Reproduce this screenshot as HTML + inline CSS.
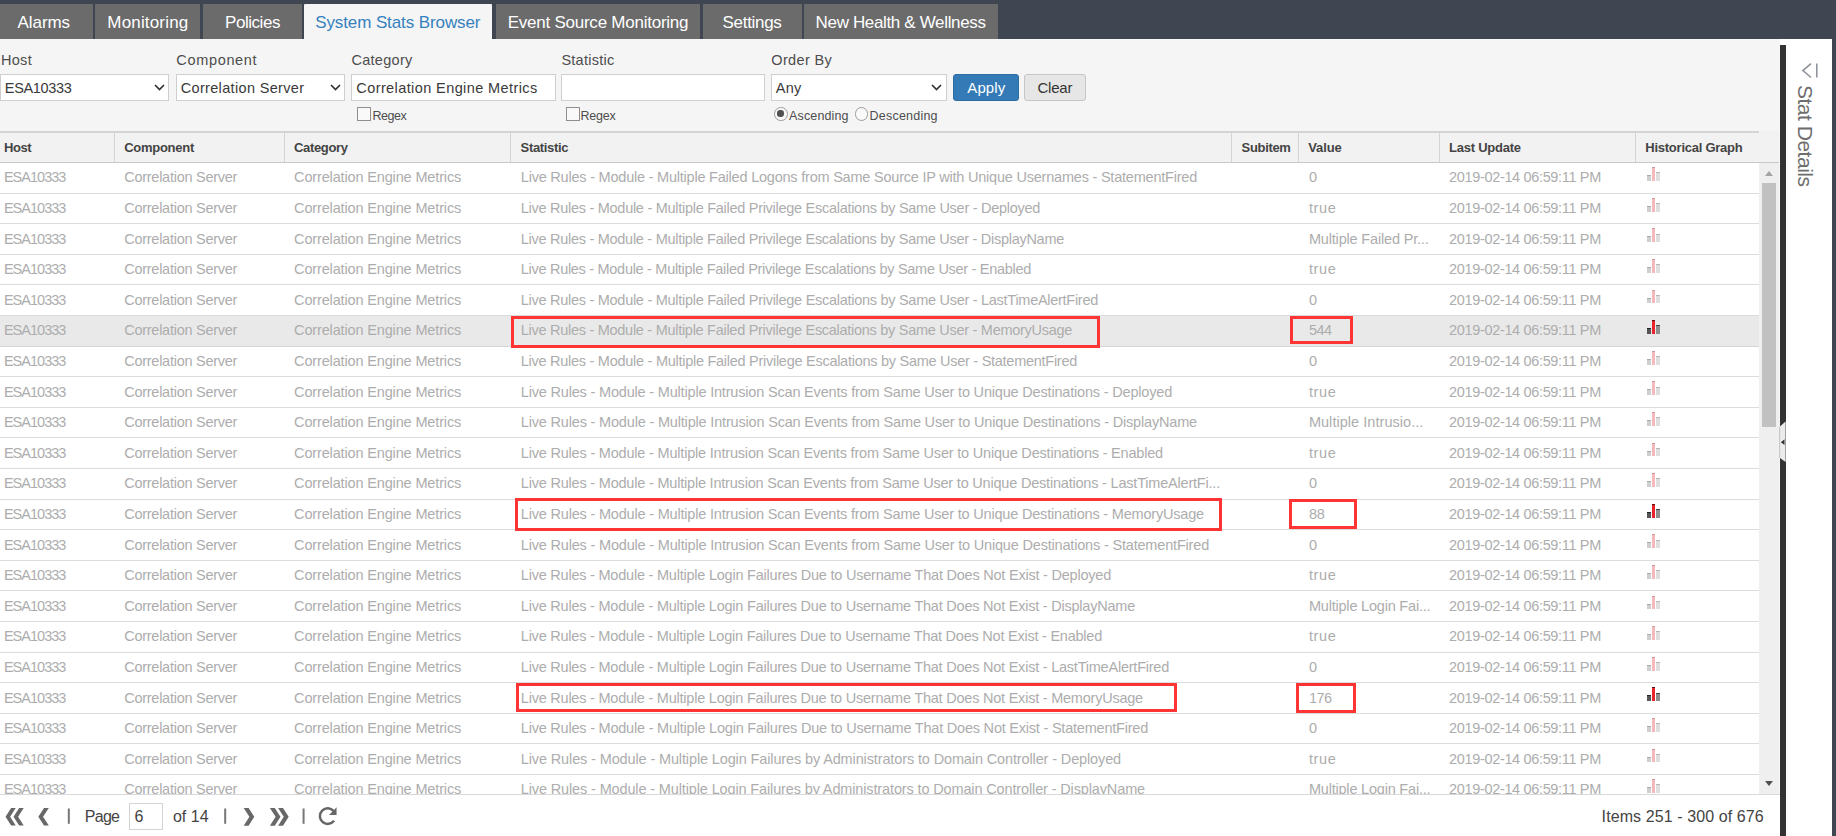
<!DOCTYPE html>
<html><head><meta charset="utf-8">
<style>
*{box-sizing:border-box;margin:0;padding:0}
html,body{width:1836px;height:836px;overflow:hidden;background:#3f4551;font-family:"Liberation Sans",sans-serif;position:relative}
.abs{position:absolute}
.t{position:absolute;white-space:pre;line-height:1}
.tab{position:absolute;top:4.3px;height:35.1px;background:#6b6b6b;border-radius:1px 1px 0 0}
.tab.act{background:#f5f5f5;height:35.7px}
#main{position:absolute;left:0;top:39.4px;width:1780px;height:797px;background:#f5f5f5}
.inp{position:absolute;top:74px;height:26.5px;background:#fff;border:1px solid #cfcfcf}
.chev{position:absolute;top:9px;width:11px;height:7px}
.cb{position:absolute;top:107.4px;width:13.8px;height:13.6px;border:1.5px solid #8e8e8e;background:#f9f9f9;border-radius:0.5px}
.rad{position:absolute;top:107.4px;width:13.6px;height:13.6px;border:1.5px solid #9c9c9c;border-radius:50%;background:#f9f9f9}
.btn{position:absolute;top:73.6px;height:27.1px;border-radius:3px}
#thead{position:absolute;left:0;top:131.1px;width:1779px;height:32px;background:#f2f2f2;border-bottom:1.6px solid #c8c8c8}
#thead .tb{position:absolute;left:0;top:0;width:1759px;height:1.6px;background:#d4d4d4}
.hsep{position:absolute;top:1.6px;width:1.2px;height:29.4px;background:#d4d4d4}
#tbody{position:absolute;left:0;top:163.1px;width:1759px;height:631.3px;overflow:hidden;background:#fff}
.row{position:absolute;left:0;width:1759px;height:30.6px;border-bottom:1.4px solid #dcdcdc}
.row.hl{background:#e9e9e9;border-bottom-color:#d6d6d6}
.gi{position:absolute;left:1647px;top:3.9px;width:14px;height:14px}
.gi i{position:absolute;bottom:0;width:3.8px}
.gi .b1{left:0;height:5.7px;background:#cfcfcf;border-top:1px solid #a9a9a9}
.gi .b2{left:4.7px;height:13.8px;background:#f6b9bb;border-top:1px solid #c89a9a}
.gi .b3{left:9.1px;height:8.6px;background:#dedede;border-top:1px solid #b7b7b7}
.gi.dk .b1{background:#555;border-top-color:#222}
.gi.dk .b2{background:#e8232a;border-top-color:#5a0f10}
.gi.dk .b3{background:#8e8e8e;border-top-color:#444}
.rb{position:absolute;border:3.4px solid #ff3434}
#sbar{position:absolute;left:1759px;top:163.1px;width:20px;height:631.3px;background:#efefef}
#foot{position:absolute;left:0;top:794.4px;width:1780px;height:42px;background:#fff;border-top:1.3px solid #d9d9d9}

</style></head><body>
<div class="tab" style="left:-6px;width:98.6px"></div>
<span class="t" style="left:17.60px;top:14.41px;font-size:17px;color:#fff;letter-spacing:-0.084px;">Alarms</span>
<div class="tab" style="left:95.3px;width:104.3px"></div>
<span class="t" style="left:107.30px;top:14.41px;font-size:17px;color:#fff;letter-spacing:0.172px;">Monitoring</span>
<div class="tab" style="left:202.6px;width:99.6px"></div>
<span class="t" style="left:225.00px;top:14.41px;font-size:17px;color:#fff;letter-spacing:-0.449px;">Policies</span>
<div class="tab act" style="left:303.7px;width:188.3px"></div>
<span class="t" style="left:315.20px;top:14.41px;font-size:17px;color:#3581be;letter-spacing:-0.101px;">System Stats Browser</span>
<div class="tab" style="left:495.5px;width:204.1px"></div>
<span class="t" style="left:507.70px;top:14.41px;font-size:17px;color:#fff;letter-spacing:-0.242px;">Event Source Monitoring</span>
<div class="tab" style="left:702.6px;width:99.3px"></div>
<span class="t" style="left:722.60px;top:14.41px;font-size:17px;color:#fff;letter-spacing:-0.317px;">Settings</span>
<div class="tab" style="left:803.7px;width:193.9px"></div>
<span class="t" style="left:815.60px;top:14.41px;font-size:17px;color:#fff;letter-spacing:-0.349px;">New Health &amp; Wellness</span>
<div id="main"></div>
<span class="t" style="left:0.90px;top:52.53px;font-size:14.5px;color:#4d4d4d;letter-spacing:0.343px;">Host</span>
<span class="t" style="left:176.30px;top:52.53px;font-size:14.5px;color:#4d4d4d;letter-spacing:0.670px;">Component</span>
<span class="t" style="left:351.50px;top:52.53px;font-size:14.5px;color:#4d4d4d;letter-spacing:0.270px;">Category</span>
<span class="t" style="left:561.40px;top:52.53px;font-size:14.5px;color:#4d4d4d;letter-spacing:0.248px;">Statistic</span>
<span class="t" style="left:771.30px;top:52.53px;font-size:14.5px;color:#4d4d4d;letter-spacing:0.336px;">Order By</span>
<div class="inp" style="left:0;width:168.8px"><svg class="chev" style="left:152.8px" viewBox="0 0 11 7"><path d="M1 1 L5.5 5.5 L10 1" fill="none" stroke="#333" stroke-width="1.7"/></svg></div>
<div class="inp" style="left:176px;width:168.8px"><svg class="chev" style="left:152.8px" viewBox="0 0 11 7"><path d="M1 1 L5.5 5.5 L10 1" fill="none" stroke="#333" stroke-width="1.7"/></svg></div>
<div class="inp" style="left:351.4px;width:204.2px"></div>
<div class="inp" style="left:561.3px;width:203.8px"></div>
<div class="inp" style="left:771px;width:175.5px"><svg class="chev" style="left:159.3px" viewBox="0 0 11 7"><path d="M1 1 L5.5 5.5 L10 1" fill="none" stroke="#333" stroke-width="1.7"/></svg></div>
<span class="t" style="left:4.80px;top:80.73px;font-size:14.5px;color:#3a3a3a;letter-spacing:-0.318px;">ESA10333</span>
<span class="t" style="left:180.70px;top:80.73px;font-size:14.5px;color:#3a3a3a;letter-spacing:0.335px;">Correlation Server</span>
<span class="t" style="left:356.30px;top:80.73px;font-size:14.5px;color:#3a3a3a;letter-spacing:0.405px;">Correlation Engine Metrics</span>
<span class="t" style="left:775.70px;top:80.73px;font-size:14.5px;color:#3a3a3a;letter-spacing:0.267px;">Any</span>
<div class="btn" style="left:953px;width:65.8px;background:#337ab7;border:1px solid #2e6da4"></div>
<div class="btn" style="left:1024.1px;width:61.8px;background:#e6e6e6;border:1px solid #c6c6c6"></div>
<span class="t" style="left:967.30px;top:80.30px;font-size:15px;color:#fff;letter-spacing:0.114px;">Apply</span>
<span class="t" style="left:1037.50px;top:80.30px;font-size:15px;color:#333;letter-spacing:-0.232px;">Clear</span>
<div class="cb" style="left:357.4px"></div><div class="cb" style="left:566px"></div>
<div class="rad" style="left:774.4px"><div class="abs" style="left:2.1px;top:2.1px;width:6.4px;height:6.4px;border-radius:50%;background:#505050"></div></div>
<div class="rad" style="left:854.8px"></div>
<span class="t" style="left:372.40px;top:109.82px;font-size:12.5px;color:#4d4d4d;letter-spacing:-0.468px;">Regex</span>
<span class="t" style="left:580.60px;top:109.82px;font-size:12.5px;color:#4d4d4d;letter-spacing:-0.268px;">Regex</span>
<span class="t" style="left:789.00px;top:109.82px;font-size:12.5px;color:#4d4d4d;letter-spacing:0.147px;">Ascending</span>
<span class="t" style="left:869.50px;top:109.82px;font-size:12.5px;color:#4d4d4d;letter-spacing:0.228px;">Descending</span>
<div id="thead"><div class="tb"></div><div class="hsep" style="left:113.6px"></div><div class="hsep" style="left:283.6px"></div><div class="hsep" style="left:510.3px"></div><div class="hsep" style="left:1231px"></div><div class="hsep" style="left:1297.9px"></div><div class="hsep" style="left:1438.7px"></div><div class="hsep" style="left:1634.9px"></div></div>
<span class="t" style="left:4.00px;top:141.00px;font-size:13px;color:#444;font-weight:bold;letter-spacing:-0.423px;">Host</span>
<span class="t" style="left:124.20px;top:141.00px;font-size:13px;color:#444;font-weight:bold;letter-spacing:-0.269px;">Component</span>
<span class="t" style="left:294.10px;top:141.00px;font-size:13px;color:#444;font-weight:bold;letter-spacing:-0.357px;">Category</span>
<span class="t" style="left:520.60px;top:141.00px;font-size:13px;color:#444;font-weight:bold;letter-spacing:-0.331px;">Statistic</span>
<span class="t" style="left:1241.60px;top:141.00px;font-size:13px;color:#444;font-weight:bold;letter-spacing:-0.328px;">Subitem</span>
<span class="t" style="left:1308.20px;top:141.00px;font-size:13px;color:#444;font-weight:bold;letter-spacing:-0.114px;">Value</span>
<span class="t" style="left:1449.00px;top:141.00px;font-size:13px;color:#444;font-weight:bold;letter-spacing:-0.237px;">Last Update</span>
<span class="t" style="left:1645.30px;top:141.00px;font-size:13px;color:#444;font-weight:bold;letter-spacing:-0.246px;">Historical Graph</span>
<div id="tbody">
<div class="row" style="top:0.00px"><span class="gi"><i class="b1"></i><i class="b2"></i><i class="b3"></i></span></div>
<span class="t" style="left:3.90px;top:7.23px;font-size:14.5px;color:#adadad;letter-spacing:-0.980px;">ESA10333</span>
<span class="t" style="left:124.20px;top:7.23px;font-size:14.5px;color:#adadad;letter-spacing:-0.260px;">Correlation Server</span>
<span class="t" style="left:294.10px;top:7.23px;font-size:14.5px;color:#adadad;letter-spacing:-0.148px;">Correlation Engine Metrics</span>
<span class="t" style="left:520.80px;top:7.23px;font-size:14.5px;color:#adadad;letter-spacing:-0.216px;">Live Rules - Module - Multiple Failed Logons from Same Source IP with Unique Usernames - StatementFired</span>
<span class="t" style="left:1308.90px;top:7.23px;font-size:14.5px;color:#adadad;letter-spacing:-1.478px;">0</span>
<span class="t" style="left:1449.10px;top:7.23px;font-size:14.5px;color:#adadad;letter-spacing:-0.344px;">2019-02-14 06:59:11 PM</span>
<div class="row" style="top:30.60px"><span class="gi"><i class="b1"></i><i class="b2"></i><i class="b3"></i></span></div>
<span class="t" style="left:3.90px;top:37.83px;font-size:14.5px;color:#adadad;letter-spacing:-0.980px;">ESA10333</span>
<span class="t" style="left:124.20px;top:37.83px;font-size:14.5px;color:#adadad;letter-spacing:-0.260px;">Correlation Server</span>
<span class="t" style="left:294.10px;top:37.83px;font-size:14.5px;color:#adadad;letter-spacing:-0.148px;">Correlation Engine Metrics</span>
<span class="t" style="left:520.80px;top:37.83px;font-size:14.5px;color:#adadad;letter-spacing:-0.279px;">Live Rules - Module - Multiple Failed Privilege Escalations by Same User - Deployed</span>
<span class="t" style="left:1308.90px;top:37.83px;font-size:14.5px;color:#adadad;letter-spacing:0.625px;">true</span>
<span class="t" style="left:1449.10px;top:37.83px;font-size:14.5px;color:#adadad;letter-spacing:-0.344px;">2019-02-14 06:59:11 PM</span>
<div class="row" style="top:61.20px"><span class="gi"><i class="b1"></i><i class="b2"></i><i class="b3"></i></span></div>
<span class="t" style="left:3.90px;top:68.43px;font-size:14.5px;color:#adadad;letter-spacing:-0.980px;">ESA10333</span>
<span class="t" style="left:124.20px;top:68.43px;font-size:14.5px;color:#adadad;letter-spacing:-0.260px;">Correlation Server</span>
<span class="t" style="left:294.10px;top:68.43px;font-size:14.5px;color:#adadad;letter-spacing:-0.148px;">Correlation Engine Metrics</span>
<span class="t" style="left:520.80px;top:68.43px;font-size:14.5px;color:#adadad;letter-spacing:-0.281px;">Live Rules - Module - Multiple Failed Privilege Escalations by Same User - DisplayName</span>
<span class="t" style="left:1308.90px;top:68.43px;font-size:14.5px;color:#adadad;letter-spacing:-0.172px;">Multiple Failed Pr...</span>
<span class="t" style="left:1449.10px;top:68.43px;font-size:14.5px;color:#adadad;letter-spacing:-0.344px;">2019-02-14 06:59:11 PM</span>
<div class="row" style="top:91.80px"><span class="gi"><i class="b1"></i><i class="b2"></i><i class="b3"></i></span></div>
<span class="t" style="left:3.90px;top:99.03px;font-size:14.5px;color:#adadad;letter-spacing:-0.980px;">ESA10333</span>
<span class="t" style="left:124.20px;top:99.03px;font-size:14.5px;color:#adadad;letter-spacing:-0.260px;">Correlation Server</span>
<span class="t" style="left:294.10px;top:99.03px;font-size:14.5px;color:#adadad;letter-spacing:-0.148px;">Correlation Engine Metrics</span>
<span class="t" style="left:520.80px;top:99.03px;font-size:14.5px;color:#adadad;letter-spacing:-0.294px;">Live Rules - Module - Multiple Failed Privilege Escalations by Same User - Enabled</span>
<span class="t" style="left:1308.90px;top:99.03px;font-size:14.5px;color:#adadad;letter-spacing:0.625px;">true</span>
<span class="t" style="left:1449.10px;top:99.03px;font-size:14.5px;color:#adadad;letter-spacing:-0.344px;">2019-02-14 06:59:11 PM</span>
<div class="row" style="top:122.40px"><span class="gi"><i class="b1"></i><i class="b2"></i><i class="b3"></i></span></div>
<span class="t" style="left:3.90px;top:129.63px;font-size:14.5px;color:#adadad;letter-spacing:-0.980px;">ESA10333</span>
<span class="t" style="left:124.20px;top:129.63px;font-size:14.5px;color:#adadad;letter-spacing:-0.260px;">Correlation Server</span>
<span class="t" style="left:294.10px;top:129.63px;font-size:14.5px;color:#adadad;letter-spacing:-0.148px;">Correlation Engine Metrics</span>
<span class="t" style="left:520.80px;top:129.63px;font-size:14.5px;color:#adadad;letter-spacing:-0.278px;">Live Rules - Module - Multiple Failed Privilege Escalations by Same User - LastTimeAlertFired</span>
<span class="t" style="left:1308.90px;top:129.63px;font-size:14.5px;color:#adadad;letter-spacing:-1.478px;">0</span>
<span class="t" style="left:1449.10px;top:129.63px;font-size:14.5px;color:#adadad;letter-spacing:-0.344px;">2019-02-14 06:59:11 PM</span>
<div class="row hl" style="top:153.00px"><span class="gi dk"><i class="b1"></i><i class="b2"></i><i class="b3"></i></span></div>
<span class="t" style="left:3.90px;top:160.23px;font-size:14.5px;color:#adadad;letter-spacing:-0.980px;">ESA10333</span>
<span class="t" style="left:124.20px;top:160.23px;font-size:14.5px;color:#adadad;letter-spacing:-0.260px;">Correlation Server</span>
<span class="t" style="left:294.10px;top:160.23px;font-size:14.5px;color:#adadad;letter-spacing:-0.148px;">Correlation Engine Metrics</span>
<span class="t" style="left:520.80px;top:160.23px;font-size:14.5px;color:#adadad;letter-spacing:-0.281px;">Live Rules - Module - Multiple Failed Privilege Escalations by Same User - MemoryUsage</span>
<span class="t" style="left:1308.90px;top:160.23px;font-size:14.5px;color:#adadad;letter-spacing:-0.568px;">544</span>
<span class="t" style="left:1449.10px;top:160.23px;font-size:14.5px;color:#adadad;letter-spacing:-0.344px;">2019-02-14 06:59:11 PM</span>
<div class="row" style="top:183.60px"><span class="gi"><i class="b1"></i><i class="b2"></i><i class="b3"></i></span></div>
<span class="t" style="left:3.90px;top:190.83px;font-size:14.5px;color:#adadad;letter-spacing:-0.980px;">ESA10333</span>
<span class="t" style="left:124.20px;top:190.83px;font-size:14.5px;color:#adadad;letter-spacing:-0.260px;">Correlation Server</span>
<span class="t" style="left:294.10px;top:190.83px;font-size:14.5px;color:#adadad;letter-spacing:-0.148px;">Correlation Engine Metrics</span>
<span class="t" style="left:520.80px;top:190.83px;font-size:14.5px;color:#adadad;letter-spacing:-0.270px;">Live Rules - Module - Multiple Failed Privilege Escalations by Same User - StatementFired</span>
<span class="t" style="left:1308.90px;top:190.83px;font-size:14.5px;color:#adadad;letter-spacing:-1.478px;">0</span>
<span class="t" style="left:1449.10px;top:190.83px;font-size:14.5px;color:#adadad;letter-spacing:-0.344px;">2019-02-14 06:59:11 PM</span>
<div class="row" style="top:214.20px"><span class="gi"><i class="b1"></i><i class="b2"></i><i class="b3"></i></span></div>
<span class="t" style="left:3.90px;top:221.43px;font-size:14.5px;color:#adadad;letter-spacing:-0.980px;">ESA10333</span>
<span class="t" style="left:124.20px;top:221.43px;font-size:14.5px;color:#adadad;letter-spacing:-0.260px;">Correlation Server</span>
<span class="t" style="left:294.10px;top:221.43px;font-size:14.5px;color:#adadad;letter-spacing:-0.148px;">Correlation Engine Metrics</span>
<span class="t" style="left:520.80px;top:221.43px;font-size:14.5px;color:#adadad;letter-spacing:-0.183px;">Live Rules - Module - Multiple Intrusion Scan Events from Same User to Unique Destinations - Deployed</span>
<span class="t" style="left:1308.90px;top:221.43px;font-size:14.5px;color:#adadad;letter-spacing:0.625px;">true</span>
<span class="t" style="left:1449.10px;top:221.43px;font-size:14.5px;color:#adadad;letter-spacing:-0.344px;">2019-02-14 06:59:11 PM</span>
<div class="row" style="top:244.80px"><span class="gi"><i class="b1"></i><i class="b2"></i><i class="b3"></i></span></div>
<span class="t" style="left:3.90px;top:252.03px;font-size:14.5px;color:#adadad;letter-spacing:-0.980px;">ESA10333</span>
<span class="t" style="left:124.20px;top:252.03px;font-size:14.5px;color:#adadad;letter-spacing:-0.260px;">Correlation Server</span>
<span class="t" style="left:294.10px;top:252.03px;font-size:14.5px;color:#adadad;letter-spacing:-0.148px;">Correlation Engine Metrics</span>
<span class="t" style="left:520.80px;top:252.03px;font-size:14.5px;color:#adadad;letter-spacing:-0.178px;">Live Rules - Module - Multiple Intrusion Scan Events from Same User to Unique Destinations - DisplayName</span>
<span class="t" style="left:1308.90px;top:252.03px;font-size:14.5px;color:#adadad;letter-spacing:0.043px;">Multiple Intrusio...</span>
<span class="t" style="left:1449.10px;top:252.03px;font-size:14.5px;color:#adadad;letter-spacing:-0.344px;">2019-02-14 06:59:11 PM</span>
<div class="row" style="top:275.40px"><span class="gi"><i class="b1"></i><i class="b2"></i><i class="b3"></i></span></div>
<span class="t" style="left:3.90px;top:282.63px;font-size:14.5px;color:#adadad;letter-spacing:-0.980px;">ESA10333</span>
<span class="t" style="left:124.20px;top:282.63px;font-size:14.5px;color:#adadad;letter-spacing:-0.260px;">Correlation Server</span>
<span class="t" style="left:294.10px;top:282.63px;font-size:14.5px;color:#adadad;letter-spacing:-0.148px;">Correlation Engine Metrics</span>
<span class="t" style="left:520.80px;top:282.63px;font-size:14.5px;color:#adadad;letter-spacing:-0.195px;">Live Rules - Module - Multiple Intrusion Scan Events from Same User to Unique Destinations - Enabled</span>
<span class="t" style="left:1308.90px;top:282.63px;font-size:14.5px;color:#adadad;letter-spacing:0.625px;">true</span>
<span class="t" style="left:1449.10px;top:282.63px;font-size:14.5px;color:#adadad;letter-spacing:-0.344px;">2019-02-14 06:59:11 PM</span>
<div class="row" style="top:306.00px"><span class="gi"><i class="b1"></i><i class="b2"></i><i class="b3"></i></span></div>
<span class="t" style="left:3.90px;top:313.23px;font-size:14.5px;color:#adadad;letter-spacing:-0.980px;">ESA10333</span>
<span class="t" style="left:124.20px;top:313.23px;font-size:14.5px;color:#adadad;letter-spacing:-0.260px;">Correlation Server</span>
<span class="t" style="left:294.10px;top:313.23px;font-size:14.5px;color:#adadad;letter-spacing:-0.148px;">Correlation Engine Metrics</span>
<span class="t" style="left:520.80px;top:313.23px;font-size:14.5px;color:#adadad;letter-spacing:-0.201px;">Live Rules - Module - Multiple Intrusion Scan Events from Same User to Unique Destinations - LastTimeAlertFi...</span>
<span class="t" style="left:1308.90px;top:313.23px;font-size:14.5px;color:#adadad;letter-spacing:-1.478px;">0</span>
<span class="t" style="left:1449.10px;top:313.23px;font-size:14.5px;color:#adadad;letter-spacing:-0.344px;">2019-02-14 06:59:11 PM</span>
<div class="row" style="top:336.60px"><span class="gi dk"><i class="b1"></i><i class="b2"></i><i class="b3"></i></span></div>
<span class="t" style="left:3.90px;top:343.83px;font-size:14.5px;color:#adadad;letter-spacing:-0.980px;">ESA10333</span>
<span class="t" style="left:124.20px;top:343.83px;font-size:14.5px;color:#adadad;letter-spacing:-0.260px;">Correlation Server</span>
<span class="t" style="left:294.10px;top:343.83px;font-size:14.5px;color:#adadad;letter-spacing:-0.148px;">Correlation Engine Metrics</span>
<span class="t" style="left:520.80px;top:343.83px;font-size:14.5px;color:#adadad;letter-spacing:-0.188px;">Live Rules - Module - Multiple Intrusion Scan Events from Same User to Unique Destinations - MemoryUsage</span>
<span class="t" style="left:1308.90px;top:343.83px;font-size:14.5px;color:#adadad;letter-spacing:-0.320px;">88</span>
<span class="t" style="left:1449.10px;top:343.83px;font-size:14.5px;color:#adadad;letter-spacing:-0.344px;">2019-02-14 06:59:11 PM</span>
<div class="row" style="top:367.20px"><span class="gi"><i class="b1"></i><i class="b2"></i><i class="b3"></i></span></div>
<span class="t" style="left:3.90px;top:374.43px;font-size:14.5px;color:#adadad;letter-spacing:-0.980px;">ESA10333</span>
<span class="t" style="left:124.20px;top:374.43px;font-size:14.5px;color:#adadad;letter-spacing:-0.260px;">Correlation Server</span>
<span class="t" style="left:294.10px;top:374.43px;font-size:14.5px;color:#adadad;letter-spacing:-0.148px;">Correlation Engine Metrics</span>
<span class="t" style="left:520.80px;top:374.43px;font-size:14.5px;color:#adadad;letter-spacing:-0.181px;">Live Rules - Module - Multiple Intrusion Scan Events from Same User to Unique Destinations - StatementFired</span>
<span class="t" style="left:1308.90px;top:374.43px;font-size:14.5px;color:#adadad;letter-spacing:-1.478px;">0</span>
<span class="t" style="left:1449.10px;top:374.43px;font-size:14.5px;color:#adadad;letter-spacing:-0.344px;">2019-02-14 06:59:11 PM</span>
<div class="row" style="top:397.80px"><span class="gi"><i class="b1"></i><i class="b2"></i><i class="b3"></i></span></div>
<span class="t" style="left:3.90px;top:405.03px;font-size:14.5px;color:#adadad;letter-spacing:-0.980px;">ESA10333</span>
<span class="t" style="left:124.20px;top:405.03px;font-size:14.5px;color:#adadad;letter-spacing:-0.260px;">Correlation Server</span>
<span class="t" style="left:294.10px;top:405.03px;font-size:14.5px;color:#adadad;letter-spacing:-0.148px;">Correlation Engine Metrics</span>
<span class="t" style="left:520.80px;top:405.03px;font-size:14.5px;color:#adadad;letter-spacing:-0.222px;">Live Rules - Module - Multiple Login Failures Due to Username That Does Not Exist - Deployed</span>
<span class="t" style="left:1308.90px;top:405.03px;font-size:14.5px;color:#adadad;letter-spacing:0.625px;">true</span>
<span class="t" style="left:1449.10px;top:405.03px;font-size:14.5px;color:#adadad;letter-spacing:-0.344px;">2019-02-14 06:59:11 PM</span>
<div class="row" style="top:428.40px"><span class="gi"><i class="b1"></i><i class="b2"></i><i class="b3"></i></span></div>
<span class="t" style="left:3.90px;top:435.63px;font-size:14.5px;color:#adadad;letter-spacing:-0.980px;">ESA10333</span>
<span class="t" style="left:124.20px;top:435.63px;font-size:14.5px;color:#adadad;letter-spacing:-0.260px;">Correlation Server</span>
<span class="t" style="left:294.10px;top:435.63px;font-size:14.5px;color:#adadad;letter-spacing:-0.148px;">Correlation Engine Metrics</span>
<span class="t" style="left:520.80px;top:435.63px;font-size:14.5px;color:#adadad;letter-spacing:-0.225px;">Live Rules - Module - Multiple Login Failures Due to Username That Does Not Exist - DisplayName</span>
<span class="t" style="left:1308.90px;top:435.63px;font-size:14.5px;color:#adadad;letter-spacing:-0.202px;">Multiple Login Fai...</span>
<span class="t" style="left:1449.10px;top:435.63px;font-size:14.5px;color:#adadad;letter-spacing:-0.344px;">2019-02-14 06:59:11 PM</span>
<div class="row" style="top:459.00px"><span class="gi"><i class="b1"></i><i class="b2"></i><i class="b3"></i></span></div>
<span class="t" style="left:3.90px;top:466.23px;font-size:14.5px;color:#adadad;letter-spacing:-0.980px;">ESA10333</span>
<span class="t" style="left:124.20px;top:466.23px;font-size:14.5px;color:#adadad;letter-spacing:-0.260px;">Correlation Server</span>
<span class="t" style="left:294.10px;top:466.23px;font-size:14.5px;color:#adadad;letter-spacing:-0.148px;">Correlation Engine Metrics</span>
<span class="t" style="left:520.80px;top:466.23px;font-size:14.5px;color:#adadad;letter-spacing:-0.235px;">Live Rules - Module - Multiple Login Failures Due to Username That Does Not Exist - Enabled</span>
<span class="t" style="left:1308.90px;top:466.23px;font-size:14.5px;color:#adadad;letter-spacing:0.625px;">true</span>
<span class="t" style="left:1449.10px;top:466.23px;font-size:14.5px;color:#adadad;letter-spacing:-0.344px;">2019-02-14 06:59:11 PM</span>
<div class="row" style="top:489.60px"><span class="gi"><i class="b1"></i><i class="b2"></i><i class="b3"></i></span></div>
<span class="t" style="left:3.90px;top:496.83px;font-size:14.5px;color:#adadad;letter-spacing:-0.980px;">ESA10333</span>
<span class="t" style="left:124.20px;top:496.83px;font-size:14.5px;color:#adadad;letter-spacing:-0.260px;">Correlation Server</span>
<span class="t" style="left:294.10px;top:496.83px;font-size:14.5px;color:#adadad;letter-spacing:-0.148px;">Correlation Engine Metrics</span>
<span class="t" style="left:520.80px;top:496.83px;font-size:14.5px;color:#adadad;letter-spacing:-0.226px;">Live Rules - Module - Multiple Login Failures Due to Username That Does Not Exist - LastTimeAlertFired</span>
<span class="t" style="left:1308.90px;top:496.83px;font-size:14.5px;color:#adadad;letter-spacing:-1.478px;">0</span>
<span class="t" style="left:1449.10px;top:496.83px;font-size:14.5px;color:#adadad;letter-spacing:-0.344px;">2019-02-14 06:59:11 PM</span>
<div class="row" style="top:520.20px"><span class="gi dk"><i class="b1"></i><i class="b2"></i><i class="b3"></i></span></div>
<span class="t" style="left:3.90px;top:527.43px;font-size:14.5px;color:#adadad;letter-spacing:-0.980px;">ESA10333</span>
<span class="t" style="left:124.20px;top:527.43px;font-size:14.5px;color:#adadad;letter-spacing:-0.260px;">Correlation Server</span>
<span class="t" style="left:294.10px;top:527.43px;font-size:14.5px;color:#adadad;letter-spacing:-0.148px;">Correlation Engine Metrics</span>
<span class="t" style="left:520.80px;top:527.43px;font-size:14.5px;color:#adadad;letter-spacing:-0.226px;">Live Rules - Module - Multiple Login Failures Due to Username That Does Not Exist - MemoryUsage</span>
<span class="t" style="left:1308.90px;top:527.43px;font-size:14.5px;color:#adadad;letter-spacing:-0.568px;">176</span>
<span class="t" style="left:1449.10px;top:527.43px;font-size:14.5px;color:#adadad;letter-spacing:-0.344px;">2019-02-14 06:59:11 PM</span>
<div class="row" style="top:550.80px"><span class="gi"><i class="b1"></i><i class="b2"></i><i class="b3"></i></span></div>
<span class="t" style="left:3.90px;top:558.03px;font-size:14.5px;color:#adadad;letter-spacing:-0.980px;">ESA10333</span>
<span class="t" style="left:124.20px;top:558.03px;font-size:14.5px;color:#adadad;letter-spacing:-0.260px;">Correlation Server</span>
<span class="t" style="left:294.10px;top:558.03px;font-size:14.5px;color:#adadad;letter-spacing:-0.148px;">Correlation Engine Metrics</span>
<span class="t" style="left:520.80px;top:558.03px;font-size:14.5px;color:#adadad;letter-spacing:-0.217px;">Live Rules - Module - Multiple Login Failures Due to Username That Does Not Exist - StatementFired</span>
<span class="t" style="left:1308.90px;top:558.03px;font-size:14.5px;color:#adadad;letter-spacing:-1.478px;">0</span>
<span class="t" style="left:1449.10px;top:558.03px;font-size:14.5px;color:#adadad;letter-spacing:-0.344px;">2019-02-14 06:59:11 PM</span>
<div class="row" style="top:581.40px"><span class="gi"><i class="b1"></i><i class="b2"></i><i class="b3"></i></span></div>
<span class="t" style="left:3.90px;top:588.63px;font-size:14.5px;color:#adadad;letter-spacing:-0.980px;">ESA10333</span>
<span class="t" style="left:124.20px;top:588.63px;font-size:14.5px;color:#adadad;letter-spacing:-0.260px;">Correlation Server</span>
<span class="t" style="left:294.10px;top:588.63px;font-size:14.5px;color:#adadad;letter-spacing:-0.148px;">Correlation Engine Metrics</span>
<span class="t" style="left:520.80px;top:588.63px;font-size:14.5px;color:#adadad;letter-spacing:-0.129px;">Live Rules - Module - Multiple Login Failures by Administrators to Domain Controller - Deployed</span>
<span class="t" style="left:1308.90px;top:588.63px;font-size:14.5px;color:#adadad;letter-spacing:0.625px;">true</span>
<span class="t" style="left:1449.10px;top:588.63px;font-size:14.5px;color:#adadad;letter-spacing:-0.344px;">2019-02-14 06:59:11 PM</span>
<div class="row" style="top:612.00px"><span class="gi"><i class="b1"></i><i class="b2"></i><i class="b3"></i></span></div>
<span class="t" style="left:3.90px;top:619.23px;font-size:14.5px;color:#adadad;letter-spacing:-0.980px;">ESA10333</span>
<span class="t" style="left:124.20px;top:619.23px;font-size:14.5px;color:#adadad;letter-spacing:-0.260px;">Correlation Server</span>
<span class="t" style="left:294.10px;top:619.23px;font-size:14.5px;color:#adadad;letter-spacing:-0.148px;">Correlation Engine Metrics</span>
<span class="t" style="left:520.80px;top:619.23px;font-size:14.5px;color:#adadad;letter-spacing:-0.135px;">Live Rules - Module - Multiple Login Failures by Administrators to Domain Controller - DisplayName</span>
<span class="t" style="left:1308.90px;top:619.23px;font-size:14.5px;color:#adadad;letter-spacing:-0.202px;">Multiple Login Fai...</span>
<span class="t" style="left:1449.10px;top:619.23px;font-size:14.5px;color:#adadad;letter-spacing:-0.344px;">2019-02-14 06:59:11 PM</span>
</div>
<div class="rb" style="left:511.2px;top:316.2px;width:588.5px;height:31.6px"></div>
<div class="rb" style="left:1290.1px;top:316.2px;width:63.3px;height:27.7px"></div>
<div class="rb" style="left:514.7px;top:498.4px;width:706.9px;height:32.3px"></div>
<div class="rb" style="left:1289.2px;top:498.6px;width:67.5px;height:30.1px"></div>
<div class="rb" style="left:515.8px;top:682.9px;width:660.8px;height:29.5px"></div>
<div class="rb" style="left:1296px;top:683.2px;width:59.9px;height:29.9px"></div>
<div id="sbar">
 <svg class="abs" style="left:6px;top:7.9px" width="8" height="5" viewBox="0 0 8 5"><path d="M0 5 L4 0 L8 5Z" fill="#a3a3a3"/></svg>
 <div class="abs" style="left:3px;top:19.6px;width:14px;height:244.3px;background:#c1c1c1"></div>
 <svg class="abs" style="left:6px;top:617.9px" width="8" height="5" viewBox="0 0 8 5"><path d="M0 0 L8 0 L4 5Z" fill="#505050"/></svg>
</div>
<div id="foot"></div>
<svg class="abs" style="left:0;top:794.4px" width="350" height="41.6" viewBox="0 794.4 350 41.6">
  <g fill="#686868" transform="translate(0,0.6)">
   <path d="M11.1 807.7 L15.7 807.7 L10.1 816.6 L15.7 825.4 L11.1 825.4 L5.5 816.6Z"/>
   <path d="M19.1 807.7 L23.7 807.7 L18.1 816.6 L23.7 825.4 L19.1 825.4 L13.5 816.6Z"/>
   <path d="M44 807.7 L48.8 807.7 L43 816.6 L48.8 825.4 L44 825.4 L38.3 816.6Z"/>
   <path d="M248.6 807.8 L243.7 807.8 L249.4 816.6 L243.7 825.5 L248.6 825.5 L254.3 816.6Z"/>
   <path d="M274.8 807.8 L269.9 807.8 L275.6 816.6 L269.9 825.5 L274.8 825.5 L280.5 816.6Z"/>
   <path d="M283 807.8 L278.1 807.8 L283.8 816.6 L278.1 825.5 L283 825.5 L288.7 816.6Z"/>
  </g>
  <g fill="#777">
   <rect x="67.8" y="808.9" width="2" height="15.3"/>
   <rect x="224.2" y="808.9" width="2" height="15.3"/>
   <rect x="302.6" y="808.9" width="2" height="15.3"/>
  </g>
  <path d="M333.7 811.5 A7.8 7.8 0 1 0 334.1 821" fill="none" stroke="#666" stroke-width="2.5"/>
  <path d="M336.6 807.6 L336.6 815.3 L329.1 815.3Z" fill="#666"/>
</svg>
<div class="abs" style="left:129.4px;top:803.1px;width:33.8px;height:27.2px;border:1.4px solid #d4d4d4;background:#fff"></div>

<span class="t" style="left:84.80px;top:808.86px;font-size:16px;color:#444;letter-spacing:-0.719px;">Page</span>
<span class="t" style="left:134.50px;top:808.86px;font-size:16px;color:#444;">6</span>
<span class="t" style="left:172.90px;top:808.86px;font-size:16px;color:#444;letter-spacing:0.021px;">of 14</span>
<span class="t" style="left:1601.60px;top:808.86px;font-size:16px;color:#444;letter-spacing:0.095px;">Items 251 - 300 of 676</span>
<div class="abs" style="left:1780px;top:39.4px;width:52px;height:797px;background:#fff"></div>
<div class="abs" style="left:1780px;top:45.2px;width:5.6px;height:790.8px;background:#333"></div>
<svg class="abs" style="left:1776px;top:418px" width="14" height="48" viewBox="0 0 14 48">
 <path d="M3.6 8.8 L9.6 3.6 L9.6 44 L3.6 39.8Z" fill="#ececec"/>
 <path d="M3.6 8.8 L3.6 39.8" stroke="#c9c9c9" stroke-width="1.2"/>
 <path d="M4.9 24.3 L8.5 21.3 L8.5 27Z" fill="#333"/>
</svg>
<svg class="abs" style="left:1798px;top:60px" width="24" height="22" viewBox="0 0 24 22">
 <path d="M13 3.6 L4.9 10.6 L13 17.5" fill="none" stroke="#8f949c" stroke-width="1.6"/>
 <path d="M18.8 3.6 L18.8 17.5" stroke="#8f949c" stroke-width="1.6"/>
</svg>

<span class="t" style="left:1816.08px;top:84.80px;font-size:21px;color:#6e6e6e;letter-spacing:-0.491px;transform-origin:0 0;transform:rotate(90deg);">Stat Details</span>
<div class="abs" style="left:1832px;top:0;width:4px;height:836px;background:#3f4551"></div>
</body></html>
